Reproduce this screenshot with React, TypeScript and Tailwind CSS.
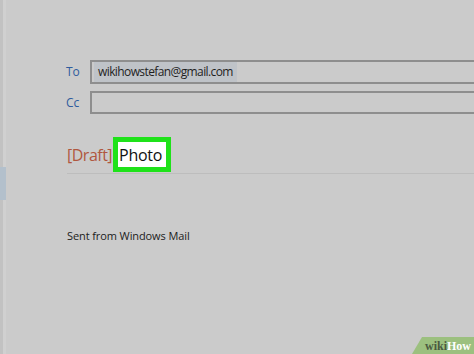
import React from 'react';

const font = { fontFamily: '"Open Sans", "Noto Sans", sans-serif' };

const App = () => {
  return (
    <div
      className="relative flex h-[354px] w-[474px] overflow-hidden bg-[#cbcbcb]"
      style={font}
    >
      {/* left pane edge + scrollbar */}
      <div className="flex h-full w-[6px] shrink-0 flex-col border-l-[3px] border-[#c2c2c2] bg-[#d0d0d0]">
        <div className="mt-[167px] h-[33px] w-[6px] -ml-[3px] bg-[#b3c0cc]" />
      </div>

      <div className="flex min-w-0 flex-1 flex-col overflow-hidden pl-[60px] pt-[60px]">
        <div className="flex items-center">
          <span className="w-[24px] shrink-0 text-[12px] text-[#2f5c9e]">To</span>
          <div className="flex h-[24px] w-[400px] shrink-0 items-center border-y-2 border-l-2 border-[#8e8e8e] pl-[2px]">
            <span className="flex h-[20px] items-center bg-[#bfc3c8] px-[4px] text-[12px] tracking-[-0.6px] text-[#1f1f1f]">
              wikihowstefan@gmail.com
            </span>
          </div>
        </div>

        <div className="mt-[7px] flex items-center">
          <span className="w-[24px] shrink-0 text-[12px] text-[#2f5c9e]">Cc</span>
          <div className="h-[23px] w-[400px] shrink-0 border-y-2 border-l-2 border-[#8e8e8e]" />
        </div>

        <div className="ml-[1px] mt-[23px] flex items-center border-b border-[#bdbdbd] pb-[1px]">
          <span className="text-[16px] tracking-[-0.5px] text-[#b0573f]">[Draft]</span>
          <span className="ml-[1px] flex h-[35px] w-[58px] items-center border-[5px] border-[#1fe21a] bg-white pl-[1px] text-[16px] tracking-[-0.3px] text-[#111]">
            Photo
          </span>
        </div>

        <p className="ml-[1px] mt-[54px] text-[11px] tracking-[-0.1px] text-[#1c1c1c]">
          Sent from Windows Mail
        </p>
      </div>

      {/* wikiHow badge */}
      <div className="absolute bottom-0 right-0 flex h-[17px] w-[62px] items-center justify-end bg-[#9cc07f] pr-[3px] [clip-path:polygon(10px_0,100%_0,100%_100%,0_100%)]">
        <span
          className="text-[12px] font-bold leading-none"
          style={{ fontFamily: '"Liberation Serif", serif' }}
        >
          <span className="text-[#4a5a40]">wiki</span>
          <span className="text-white">How</span>
        </span>
      </div>
    </div>
  );
};

export default App;
